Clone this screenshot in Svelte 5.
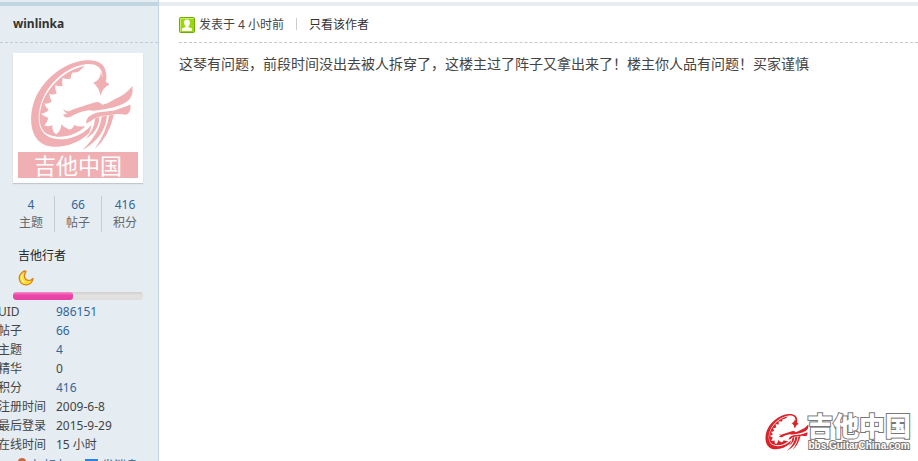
<script lang="ts">
    interface Field {
        label: string;
        value: string;
        link?: boolean;
    }

    const author = 'winlinka';
    const progress = 46;

    const stats = [
        { value: '4', label: '主题' },
        { value: '66', label: '帖子' },
        { value: '416', label: '积分' },
    ];

    const fields: Field[] = [
        { label: 'UID', value: '986151', link: true },
        { label: '帖子', value: '66', link: true },
        { label: '主题', value: '4', link: true },
        { label: '精华', value: '0' },
        { label: '积分', value: '416', link: true },
        { label: '注册时间', value: '2009-6-8' },
        { label: '最后登录', value: '2015-9-29' },
        { label: '在线时间', value: '15 小时' },
    ];
</script>

{#snippet dragon()}
    <svg class="dragon" viewBox="90 38 312 278" preserveAspectRatio="none" aria-hidden="true">
        <path
            d="M318 108 C325 64 303 42 258 45 C190 50 122 108 101 172 C83 230 97 281 133 297 C174 313 232 297 268 262 L275 238 C240 278 179 291 145 273 C103 250 112 184 139 139 C169 91 219 58 266 56 C298 56 312 75 306 108 Z"
        />
        <path
            d="M254 62 C196 73 151 119 130 164 C110 213 117 258 149 268 C181 281 229 270 256 242 Q238 245 222 238 Q221 248 208 252 Q191 245 184 236 Q184 254 169 266 Q156 258 157 238 Q145 245 133 239 Q143 229 145 217 Q134 214 123 205 Q139 202 146 193 Q137 186 133 174 Q147 176 155 168 Q149 157 148 145 Q160 150 170 143 Q164 130 166 119 Q178 125 188 121 Q185 108 188 97 Q200 104 212 99 Q211 88 218 81 Q229 83 238 77 Z"
        />
        <path d="M303 80 Q307 106 329 117 Q309 125 301 151 Q298 127 280 112 Q300 106 303 80 Z" />
        <path
            d="M190 190 C196 201 209 198 220 191 L281 172 Q298 165 307 178 Q326 174 342 162 Q378 148 397 122 Q402 153 381 168 Q361 182 320 190 Q288 198 266 194 Q233 199 213 213 Q195 221 189 208 Q197 207 202 203 Q192 202 190 190 Z"
        />
        <path
            d="M257 234 Q260 209 292 201 L343 195 Q374 184 392 178 Q393 204 377 208 Q352 202 329 209 Q288 210 271 228 Z"
        />
        <path
            d="M285 219 L298 214 Q299 253 258 279 Q284 249 285 219 Z M305 213 L321 211 Q315 276 247 314 Q301 260 305 213 Z M327 210 L342 207 Q327 273 284 311 Q321 256 327 210 Z"
        />
    </svg>
{/snippet}

<div class="post">
    <aside class="sidebar">
        <div class="author"><a href="#author">{author}</a></div>

        <div class="profile">
            <a class="avatar" href="#avatar">
                {@render dragon()}
                <span class="avatar-name">吉他中国</span>
            </a>

            <ul class="stats">
                {#each stats as stat (stat.label)}
                    <li>
                        <a href="#stat">{stat.value}</a>
                        <span>{stat.label}</span>
                    </li>
                {/each}
            </ul>

            <div class="rank">吉他行者</div>
            <svg class="moon" viewBox="0 0 16 16" aria-hidden="true">
                <path
                    d="M6 1 C3 3 .8 6 1.3 9 C2 13 5 15 8.5 14.8 C12 14.6 14.5 12 15 8.5 C13 10.5 10 11.2 8 9.3 C5.8 7 6.2 4 8 1.5 Z"
                    fill="#ffdc2e"
                    stroke="#d9801b"
                    stroke-width="1.3"
                    stroke-linejoin="round"
                />
                <path d="M4.5 4.5 C2.5 8 4 11 6.5 12.3" fill="none" stroke="#fff9b5" stroke-width="1.2" />
            </svg>
            <div class="progress"><div class="progress-fill" style:width="{progress}%"></div></div>
        </div>

        <dl class="fields">
            {#each fields as field (field.label)}
                <dt>{field.label}</dt>
                <dd>
                    {#if field.link}
                        <a href="#field">{field.value}</a>
                    {:else}
                        {field.value}
                    {/if}
                </dd>
            {/each}
        </dl>

        <div class="actions">
            <a href="#friend">
                <svg viewBox="0 0 16 16" aria-hidden="true">
                    <circle cx="8" cy="4" r="4" fill="#c7683f" />
                    <path d="M2 15 Q2 8 8 8 Q14 8 14 15 Z" fill="#5a9bd5" />
                </svg>
                加好友
            </a>
            <a href="#message">
                <svg viewBox="0 0 16 16" aria-hidden="true">
                    <path d="M1 1 H14 V13 H1 Z" fill="#2b83e6" />
                    <path d="M2 5 L8 9 L13 5" fill="none" stroke="#fff" />
                </svg>
                发消息
            </a>
        </div>
    </aside>

    <main class="content">
        <div class="meta">
            <svg class="user-icon" viewBox="0 0 16 16" aria-hidden="true">
                <rect x=".5" y=".5" width="15" height="15" rx="1" fill="#9bd80b" stroke="#6cab08" />
                <path d="M1.5 14.5 V1.5 H14.5" fill="none" stroke="#c8ee62" />
                <path
                    d="M8 2.5 C5.5 2.5 4.7 4.5 5.2 6.7 Q5.6 8.3 6.6 9.1 V10.1 L3 11.6 V14 H13 V11.6 L9.4 10.1 V9.1 Q10.4 8.3 10.8 6.7 C11.3 4.5 10.5 2.5 8 2.5 Z"
                    fill="#fff"
                />
            </svg>
            <span class="time">发表于 4 小时前</span>
            <span class="pipe"></span>
            <a href="#only-author">只看该作者</a>
        </div>
        <p class="message">
            这琴有问题，前段时间没出去被人拆穿了，这楼主过了阵子又拿出来了！楼主你人品有问题！买家谨慎
        </p>
    </main>

    <div class="watermark">
        {@render dragon()}
        <div class="watermark-text">
            <span class="watermark-name">吉他中国</span>
            <span class="watermark-url">bbs.GuitarChina.com</span>
        </div>
    </div>
</div>

<style>
    :global(body) {
        margin: 0;
        overflow: hidden;
        background: #fff;
    }

    .post {
        position: relative;
        display: flex;
        height: 100vh;
        overflow: hidden;
        font-family: 'Noto Sans', 'Noto Sans CJK SC', sans-serif;
        font-size: 12px;
        color: #444;
    }

    a {
        color: #336699;
        text-decoration: none;
    }

    .sidebar {
        flex: 0 0 158px;
        border-right: 1px solid #c2d5e3;
        background: #e5edf2;
    }

    .author {
        margin-top: 2px;
        padding: 0 13px;
        border-top: 4px solid #c2d5e3;
        border-bottom: 1px dashed #c4ccd3;
        line-height: 36px;
        font-weight: 700;
    }

    .author a {
        color: #333;
    }

    .profile {
        padding: 10px 15px 0 13px;
    }

    .avatar {
        display: flex;
        flex-direction: column;
        justify-content: space-between;
        box-sizing: border-box;
        height: 130px;
        padding: 5px;
        background: #fff;
        box-shadow: 0 1px 1px #c3c8cc;
    }

    .avatar .dragon {
        width: 104px;
        height: 93px;
        margin-left: 12px;
        fill: #f0b0b3;
    }

    .avatar-name {
        background: #f0b0b3;
        color: #fff;
        font-size: 22px;
        line-height: 26px;
        text-align: center;
    }

    .stats {
        display: flex;
        margin: 13px -5px 0;
        padding: 0;
        list-style: none;
    }

    .stats li {
        flex: 1;
        line-height: 18px;
        text-align: center;
        color: #666;
    }

    .stats li + li {
        border-left: 1px solid #c5ccd2;
    }

    .stats a,
    .stats span {
        display: block;
    }

    .rank {
        margin: 15px 5px 0;
        line-height: 18px;
        color: #222;
    }

    .moon {
        display: block;
        width: 16px;
        height: 16px;
        margin: 5px 5px 6px;
    }

    .progress {
        height: 8px;
        border-radius: 3px;
        background: linear-gradient(#cfcfcf, #e1e1e1 40%, #dedede);
        overflow: hidden;
    }

    .progress-fill {
        height: 100%;
        border-radius: 3px;
        background: linear-gradient(#f58cca, #ec45a9 40%, #e344a4);
    }

    .fields {
        display: grid;
        grid-template-columns: 58px 1fr;
        margin: 2px 0 0 -2px;
        line-height: 19px;
    }

    .fields dd {
        margin: 0;
    }

    .actions {
        display: flex;
        gap: 16px;
        padding: 4px 14px;
        line-height: 16px;
        white-space: nowrap;
    }

    .actions a {
        display: flex;
        gap: 2px;
    }

    .actions svg {
        width: 16px;
        height: 16px;
    }

    .content {
        flex: 1;
        margin-top: 2px;
        padding-left: 20px;
        border-top: 4px solid #e5edf2;
    }

    .meta {
        display: flex;
        align-items: center;
        height: 36px;
        border-bottom: 1px dashed #c8c8c8;
    }

    .user-icon {
        width: 16px;
        height: 16px;
        margin-top: 2px;
    }

    .time {
        margin-left: 4px;
    }

    .pipe {
        width: 1px;
        height: 12px;
        margin: 0 12px;
        background: #ccc;
    }

    .meta a {
        color: #333;
    }

    .message {
        margin: 10px 0;
        font-size: 14px;
        line-height: 22px;
    }

    .watermark {
        position: absolute;
        right: 7px;
        bottom: 9px;
        display: flex;
        align-items: center;
    }

    .watermark .dragon {
        width: 44px;
        height: 38px;
        margin-right: -2px;
        fill: #d8232a;
    }

    .watermark-text {
        display: flex;
        flex-direction: column;
        align-items: center;
        color: #fff;
        font-weight: 900;
        paint-order: stroke fill;
        -webkit-text-stroke: 2px #777;
    }

    .watermark-name {
        font-size: 26px;
        line-height: 28px;
    }

    .watermark-url {
        font-family: 'Liberation Sans', sans-serif;
        font-size: 10px;
        line-height: 12px;
    }
</style>
